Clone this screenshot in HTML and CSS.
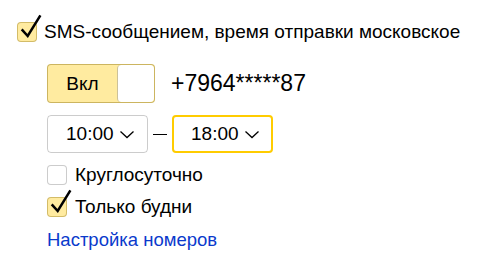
FILE: index.html
```html
<!DOCTYPE html>
<html>
<head>
<meta charset="utf-8">
<link rel="stylesheet" href="styles.css">
</head>
<body>
<div class="page">
  <label class="check check-main">
    <span class="box box-on">
      <svg class="tick" width="28" height="30" viewBox="0 0 28 30"><path d="M4.7 15.3 L10.7 22 L23.4 1.3" fill="none" stroke="#000" stroke-width="2.5"/></svg>
    </span>
    <span class="title">SMS-сообщением, время отправки московское</span>
  </label>

  <div class="settings">
    <div class="row-phone">
      <div class="toggle">
        <span class="toggle-label">Вкл</span>
        <span class="toggle-knob"></span>
      </div>
      <span class="phone">+7964*****87</span>
    </div>

    <div class="row-time">
      <div class="select">
        <span class="select-text">10:00</span>
        <svg class="chev" width="16" height="9" viewBox="0 0 16 9"><path d="M1.5 1.5 L8 7.5 L14.5 1.5" fill="none" stroke="#000" stroke-width="1.3"/></svg>
      </div>
      <span class="dash"></span>
      <div class="select select-focus">
        <span class="select-text">18:00</span>
        <svg class="chev" width="16" height="9" viewBox="0 0 16 9"><path d="M1.5 1.5 L8 7.5 L14.5 1.5" fill="none" stroke="#000" stroke-width="1.3"/></svg>
      </div>
    </div>

    <label class="check check-item">
      <span class="box"></span>
      <span class="item-text">Круглосуточно</span>
    </label>
    <label class="check check-item">
      <span class="box box-on">
        <svg class="tick" width="28" height="30" viewBox="0 0 28 30"><path d="M4.7 15.3 L10.7 22 L23.4 1.3" fill="none" stroke="#000" stroke-width="2.5"/></svg>
      </span>
      <span class="item-text">Только будни</span>
    </label>

    <a class="link" href="#">Настройка номеров</a>
  </div>
</div>
</body>
</html>
```

FILE: styles.css
```css
html, body {
  margin: 0;
  padding: 0;
  background: #fff;
}
body {
  font-family: "Liberation Sans", Arial, sans-serif;
  color: #000;
}
.page {
  padding: 22px 0 0 17px;
}
.check {
  display: flex;
  align-items: center;
}
.box {
  position: relative;
  box-sizing: border-box;
  width: 20px;
  height: 20px;
  border: 1px solid rgba(0,0,0,.2);
  border-radius: 4px;
  background: #fff;
  flex: none;
}
.box-on {
  background: #ffeba0;
  border-color: rgba(128,100,0,.35);
}
.tick {
  position: absolute;
  left: -1px;
  top: -9px;
}
.title {
  font-size: 19px;
  margin-left: 7px;
  line-height: 20px;
}
.settings {
  padding-left: 30px;
  padding-top: 22px;
  display: flex;
  flex-direction: column;
  align-items: flex-start;
}
.row-phone {
  display: flex;
  align-items: center;
}
.toggle {
  box-sizing: border-box;
  width: 108px;
  height: 39px;
  border: 1px solid rgba(128,100,0,.4);
  border-radius: 4px;
  background: #ffeba0;
  display: flex;
  overflow: hidden;
}
.toggle-label {
  width: 69px;
  font-size: 19px;
  display: flex;
  align-items: center;
  justify-content: center;
}
.toggle-knob {
  flex: 1;
  background: #fff;
  border-left: 1px solid rgba(128,100,0,.4);
  border-radius: 4px;
}
.phone {
  font-size: 23px;
  margin-left: 16px;
}
.row-time {
  display: flex;
  align-items: center;
  margin-top: 12px;
}
.select {
  box-sizing: border-box;
  width: 101px;
  height: 38px;
  border: 1px solid rgba(0,0,0,.2);
  border-radius: 4px;
  display: flex;
  align-items: center;
  padding-left: 18px;
}
.select-focus {
  border: 2px solid #fc0;
  padding-left: 17px;
}
.select-text {
  font-size: 19px;
}
.chev {
  margin-left: 5px;
  margin-top: 1px;
}
.dash {
  width: 14px;
  height: 1px;
  background: #000;
  margin: 0 5px 0 5px;
}
.check-item {
  margin-top: 12px;
}
.item-text {
  font-size: 19px;
  margin-left: 8px;
  line-height: 20px;
}
.link {
  font-size: 18.5px;
  color: #0a3acc;
  text-decoration: none;
  margin-top: 12px;
}
```
